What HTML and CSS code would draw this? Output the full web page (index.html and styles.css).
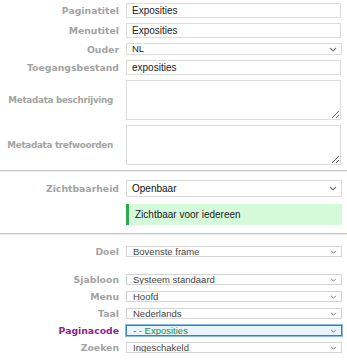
FILE: index.html
```html
<!DOCTYPE html>
<html lang="nl">
<head>
    <meta charset="UTF-8">
    <title>Pagina bewerken</title>
    <link rel="stylesheet" href="styles.css">
</head>
<body>
    <div class="page-form">
        <div class="section section-main">
            <div class="row">
                <label class="lbl">Paginatitel</label>
                <input class="txt" type="text" value="Exposities">
            </div>
            <div class="row">
                <label class="lbl">Menutitel</label>
                <input class="txt" type="text" value="Exposities">
            </div>
            <div class="row">
                <label class="lbl">Ouder</label>
                <select class="sel sel-small"><option>NL</option></select>
            </div>
            <div class="row">
                <label class="lbl">Toegangsbestand</label>
                <input class="txt" type="text" value="exposities">
            </div>
            <div class="row">
                <label class="lbl lbl-meta">Metadata beschrijving</label>
                <textarea class="area"></textarea>
            </div>
            <div class="row row-meta2">
                <label class="lbl lbl-meta">Metadata trefwoorden</label>
                <textarea class="area"></textarea>
            </div>
        </div>

        <div class="divider"></div>

        <div class="section section-visibility">
            <div class="row">
                <label class="lbl">Zichtbaarheid</label>
                <select class="sel sel-big"><option>Openbaar</option></select>
            </div>
            <div class="row">
                <span></span>
                <div class="notice">Zichtbaar voor iedereen</div>
            </div>
        </div>

        <div class="divider"></div>

        <div class="section section-options">
            <div class="row row-doel">
                <label class="lbl">Doel</label>
                <select class="sel sel-mini"><option>Bovenste frame</option></select>
            </div>
            <div class="row">
                <label class="lbl">Sjabloon</label>
                <select class="sel sel-mini"><option>Systeem standaard</option></select>
            </div>
            <div class="row">
                <label class="lbl">Menu</label>
                <select class="sel sel-mini"><option>Hoofd</option></select>
            </div>
            <div class="row">
                <label class="lbl">Taal</label>
                <select class="sel sel-mini"><option>Nederlands</option></select>
            </div>
            <div class="row">
                <label class="lbl lbl-active">Paginacode</label>
                <select class="sel sel-mini sel-focus"><option>- -  Exposities</option></select>
            </div>
            <div class="row">
                <label class="lbl">Zoeken</label>
                <select class="sel sel-mini"><option>Ingeschakeld</option></select>
            </div>
        </div>
    </div>
</body>
</html>
```

FILE: styles.css
```css
body {
    margin: 0;
    background: #fff;
    font-family: "Liberation Sans", Arial, sans-serif;
}
.page-form {
    width: 347px;
}
.section-main {
    padding: 3px 0 5px;
}
.section-visibility {
    padding: 8px 0 8px;
}
.section-options {
    padding: 11px 0 0;
}
.row {
    display: grid;
    grid-template-columns: 119px 216px;
    column-gap: 7px;
    align-items: center;
    margin-bottom: 5px;
}
.section-main .row:last-child,
.section-visibility .row:last-child {
    margin-bottom: 0;
}
.row-meta2 {
    margin-top: 3px;
}
.section-visibility .row {
    margin-bottom: 7px;
}
.section-options .row {
    margin-bottom: 6px;
}
.section-options .row-doel {
    margin-bottom: 17px;
}
.lbl {
    text-align: right;
    white-space: nowrap;
    font-family: "DejaVu Sans", Verdana, sans-serif;
    font-weight: bold;
    font-size: 9.3px;
    line-height: 11px;
    color: #a3a3a3;
}
.lbl-meta {
    padding-right: 6px;
    font-size: 8.8px;
    letter-spacing: -0.3px;
}
.lbl-active {
    color: #8e1f8e;
}
.txt {
    box-sizing: border-box;
    width: 215px;
    height: 15px;
    margin: 0;
    padding: 0 5px;
    border: 1px solid #dcdcdc;
    font-family: "Liberation Sans", Arial, sans-serif;
    font-size: 10px;
    color: #222;
    outline: none;
}
.area {
    box-sizing: border-box;
    width: 215px;
    height: 40px;
    margin: 0;
    border: 1px solid #dcdcdc;
    resize: vertical;
}
.sel {
    -webkit-appearance: none;
    appearance: none;
    box-sizing: border-box;
    width: 216px;
    margin: 0;
    border: 1px solid #dcdcdc;
    background: #fff url("data:image/svg+xml,%3Csvg xmlns='http://www.w3.org/2000/svg' width='8' height='5' viewBox='0 0 8 5'%3E%3Cpath d='M1 1l3 3 3-3' fill='none' stroke='%23777' stroke-width='1.2'/%3E%3C/svg%3E") no-repeat right 4px center;
    font-family: "Liberation Sans", Arial, sans-serif;
    color: #333;
    outline: none;
}
.sel-small {
    height: 12px;
    padding: 0 5px;
    font-size: 9.5px;
    line-height: 10px;
    color: #222;
}
.sel-big {
    height: 17px;
    padding: 0 5px;
    font-size: 10px;
    color: #111;
}
.sel-mini {
    height: 11px;
    padding: 0 6px;
    font-size: 9.5px;
    line-height: 9px;
    border-color: #d4d4d4;
    color: #444;
    background-size: 7px 4px;
}
.sel-focus {
    border: 1px solid #3a7fc6;
    box-shadow: 0 0 0 1px #8db8e4;
    background-color: #e9f5fc;
    color: #2e8a2e;
}
.notice {
    box-sizing: border-box;
    width: 216px;
    height: 21px;
    padding-left: 6px;
    border-left: 3px solid #2fa84f;
    background: #d5fad9;
    font-size: 10px;
    line-height: 21px;
    color: #222;
}
.divider {
    height: 0;
    border-top: 1px solid #c8c8c8;
    border-bottom: 1px solid #ececec;
}
```
